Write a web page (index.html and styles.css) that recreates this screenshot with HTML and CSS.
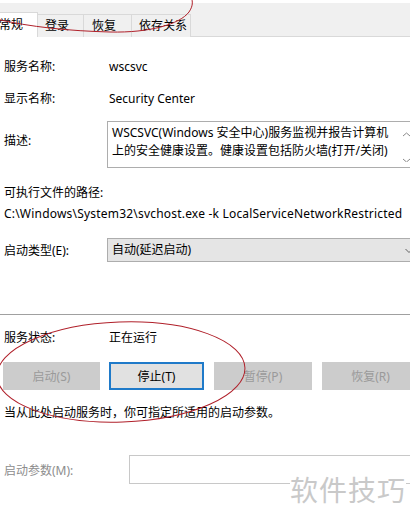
FILE: index.html
```html
<!DOCTYPE html>
<html lang="zh-CN">
<head>
    <meta charset="UTF-8">
    <title>Security Center 的属性</title>
    <link rel="stylesheet" href="styles.css">
</head>
<body>
    <div class="tabs">
        <div class="tab active">常规</div>
        <div class="tab">登录</div>
        <div class="tab">恢复</div>
        <div class="tab">依存关系</div>
    </div>

    <div class="form">
        <div class="row first">
            <span class="label">服务名称:</span>
            <span class="value">wscsvc</span>
        </div>
        <div class="row">
            <span class="label">显示名称:</span>
            <span class="value">Security Center</span>
        </div>
        <div class="row desc-row">
            <span class="label desc-label">描述:</span>
            <div class="desc-box">
                <p>WSCSVC(Windows 安全中心)服务监视并报告计算机</p>
                <p>上的安全健康设置。健康设置包括防火墙(打开/关闭)</p>
                <div class="scroll">
                    <svg width="10" height="40" viewBox="0 0 10 40">
                        <path d="M2 14 L5.5 11 L9 14" fill="none" stroke="#8a8a8a" stroke-width="1"/>
                        <path d="M2 37 L5.5 40 L9 37" fill="none" stroke="#8a8a8a" stroke-width="1"/>
                    </svg>
                </div>
            </div>
        </div>
        <div class="line path-title">可执行文件的路径:</div>
        <div class="line path">C:\Windows\System32\svchost.exe -k LocalServiceNetworkRestricted</div>
        <div class="row select-row">
            <span class="label">启动类型(E):</span>
            <div class="select">
                <span>自动(延迟启动)</span>
                <svg class="chevron" width="8" height="6" viewBox="0 0 8 6">
                    <path d="M0.5 1 L4 4.5 L7.5 1" fill="none" stroke="#606060" stroke-width="1"/>
                </svg>
            </div>
        </div>

        <div class="separator"></div>

        <div class="row status-row">
            <span class="label">服务状态:</span>
            <span class="value">正在运行</span>
        </div>
        <div class="buttons">
            <button class="btn" disabled>启动(S)</button>
            <button class="btn focus">停止(T)</button>
            <button class="btn" disabled>暂停(P)</button>
            <button class="btn last" disabled>恢复(R)</button>
        </div>
        <div class="line hint">当从此处启动服务时，你可指定所适用的启动参数。</div>
        <div class="row param-row">
            <span class="label param-label">启动参数(M):</span>
            <div class="param-input"></div>
        </div>
    </div>

    <!-- 截图上的红色圈注 -->
    <svg class="marks" width="410" height="518" viewBox="0 0 410 518">
        <path d="M-4 19 C 30 27, 70 31, 110 32 C 150 33, 180 24, 189 12 C 193 6, 193 2, 191 -4" fill="none" stroke="#b0202a" stroke-width="1"/>
        <ellipse cx="121" cy="372" rx="124" ry="50" transform="rotate(-2 121 372)" fill="none" stroke="#b0202a" stroke-width="1"/>
    </svg>

    <div class="watermark">软件技巧</div>
</body>
</html>
```

FILE: styles.css
```css
* {
    margin: 0;
    padding: 0;
    box-sizing: border-box;
}

body {
    width: 410px;
    height: 518px;
    overflow: hidden;
    position: relative;
    background: #ffffff;
    color: #000000;
    font-family: "Noto Sans", "Noto Sans CJK SC", sans-serif;
    font-size: 12px;
}

.tabs {
    margin-top: 3px;
    height: 34px;
    background: #f0f0f0;
    border-bottom: 1px solid #d9d9d9;
    display: flex;
    align-items: flex-end;
}

.tab {
    flex-shrink: 0;
    height: 23px;
    line-height: 21px;
    padding: 0 6px;
    border: 1px solid #d9d9d9;
    border-bottom: none;
    margin-left: -1px;
    margin-bottom: -1px;
    background: #f0f0f0;
    white-space: nowrap;
}

.tab.active {
    background: #ffffff;
    height: 25px;
    line-height: 23px;
    margin-left: -8px;
    padding: 0 8px 0 6px;
    width: 46px;
}

.tab:nth-child(2) { width: 47px; padding-left: 7px; }
.tab:nth-child(3) { width: 49px; padding-left: 8px; }
.tab:nth-child(4) { width: 60px; padding-left: 7px; }

.form {
    padding-left: 4px;
}

.row {
    display: flex;
    align-items: center;
    height: 32px;
}

.row.first {
    margin-top: 13px;
}

.label {
    width: 105px;
    flex-shrink: 0;
}

.desc-row {
    height: 47px;
    margin-top: 7px;
    align-items: flex-start;
}

.desc-label {
    padding-top: 10px;
}

.desc-box {
    flex: 1;
    height: 47px;
    margin-left: -2px;
    margin-right: -20px;
    border: 1px solid #adadad;
    padding: 2px 0 0 4px;
    line-height: 18px;
    position: relative;
}

.scroll {
    position: absolute;
    top: 0;
    left: 293px;
}

.line {
    height: 16px;
    line-height: 16px;
}

.path-title {
    margin-top: 17px;
}

.path {
    margin-top: 5px;
    letter-spacing: 0.2px;
    white-space: nowrap;
}

.select-row {
    margin-top: 16px;
    height: 24px;
}

.select {
    flex: 1;
    height: 24px;
    margin-left: -2px;
    margin-right: -20px;
    background: #e5e5e5;
    border: 1px solid #adadad;
    padding-left: 4px;
    line-height: 22px;
    position: relative;
}

.chevron {
    position: absolute;
    left: 297px;
    top: 9px;
}

.separator {
    margin: 52px 0 0 -4px;
    height: 1px;
    background: #a0a0a0;
}

.status-row {
    margin-top: 14px;
    height: 16px;
}

.buttons {
    display: flex;
    margin-top: 17px;
    margin-left: -1px;
}

.btn {
    flex-shrink: 0;
    width: 97px;
    height: 28px;
    margin-right: 10px;
    font-family: inherit;
    font-size: 12px;
    background: #cccccc;
    border: 1px solid #cccccc;
    color: #9a9a9a;
}

.btn:first-child {
    margin-right: 9px;
}

.btn.focus {
    width: 95px;
    background: #e1e1e1;
    border: 2px solid #1f7ac9;
    color: #000000;
}

.btn:nth-child(3) {
    width: 98px;
}

.hint {
    margin-top: 15px;
}

.param-row {
    margin-top: 34px;
    height: 29px;
}

.param-label {
    color: #8d8d8d;
    width: 125px;
}

.param-input {
    flex: 1;
    height: 29px;
    margin-right: -20px;
    border: 1px solid #c8c8c8;
}

.marks {
    position: absolute;
    top: 0;
    left: 0;
    pointer-events: none;
}

.watermark {
    position: absolute;
    left: 290px;
    top: 474px;
    font-size: 28px;
    line-height: 32px;
    color: #c9c9c9;
    background: #ffffff;
    letter-spacing: 1px;
}
```
